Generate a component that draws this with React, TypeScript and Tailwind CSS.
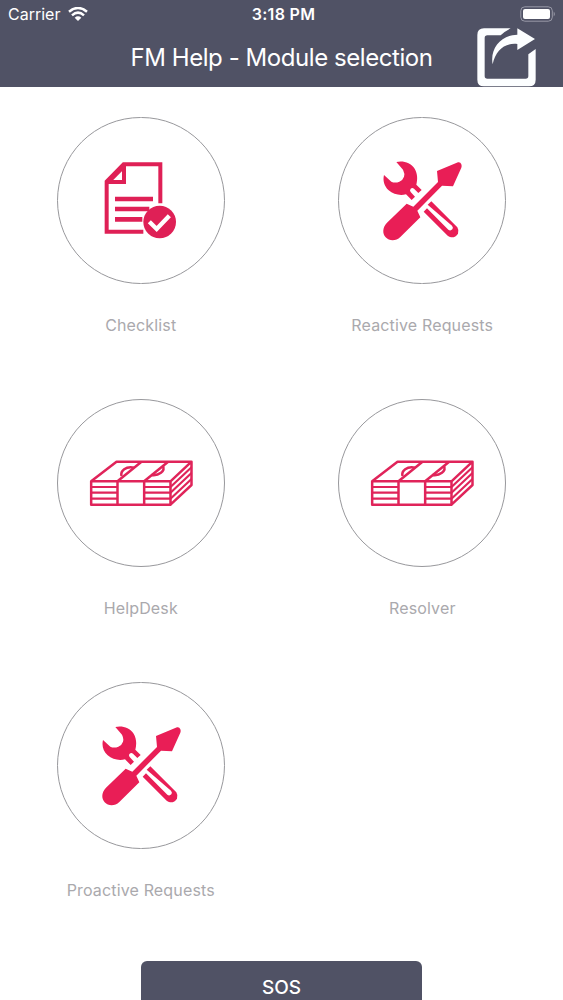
import type { ReactNode } from "react"

function ChecklistIcon() {
  return (
    <svg className="size-[100px]" viewBox="3 0 300 300" fill="none" stroke="#df2056">
      <path d="M211 160V43H101L50 95V245H160" strokeWidth="12" />
      <path d="M50 96H102V43" strokeWidth="12" />
      <path d="M54 97L103 47" strokeWidth="13" />
      <path d="M75 147H189M75 177H178M75 208H157" strokeWidth="14" />
      <circle cx="209" cy="216" r="49" fill="#df2056" stroke="none" />
      <path d="M178 215L200 237L238 197" stroke="white" strokeWidth="13" />
    </svg>
  )
}

function ToolsIcon() {
  return (
    <svg className="size-[100px]" viewBox="6 -1 300 300" fill="#e91e56">
      <path d="M79 35C99 30 122 37 134 55C143 70 143 88 139 103L155 119L145 128L132 115Q127 111 122 115Q118 120 122 125L135 139L125 149L108 132C91 136 70 133 56 120C42 107 38 90 42 74L64 94Q75 99 88 94Q99 89 102 79Q105 70 99 58Z" />
      <path d="M201 62L264 36Q271 34 274 42Q276 47 274 52L249 108L216 106L142 181L151 201L91 260C78 273 58 273 47 261C36 249 38 230 51 217L110 160L130 169L204 95Z" />
      <path d="M184 153L262 231Q268 241 264 250Q257 262 243 261Q238 260 233 256L161 184L171 174L235 238Q241 243 247 237Q251 232 246 226L173 163Z" />
    </svg>
  )
}

function MoneyIcon() {
  return (
    <svg className="h-[75px] w-[120px]" viewBox="2.5 -1 360 225" fill="none" stroke="#e0245a" strokeWidth="7.5" strokeLinejoin="round">
      <path d="M33 108L109 49H334L271 108ZM33 108V178H271V108M334 49V119L271 178" />
      <path d="M35 125H112M35 142H112M35 160H112M192 125H271M192 142H271M192 160H271" strokeWidth="6.5" />
      <path d="M271 125L334 66M271 142L334 83M271 160L334 101" strokeWidth="6.5" />
      <path d="M112 178V108L183 50M192 178V108L263 50" />
      <path d="M124 92C120 76 137 62 162 67M214 89C235 92 257 78 248 61" />
    </svg>
  )
}

function ShareIcon() {
  return (
    <svg className="h-[60px] w-[60px]" viewBox="4 3 180 180" fill="#fcfeff">
      <path d="M105 4H25Q5 4 5 24V158Q5 178 25 178H160Q180 178 180 158V66L158 82V147Q158 155 150 155H35Q27 155 27 147V33Q27 25 35 25H75Q88 12 105 4Z" />
      <path d="M125 4L178 36L125 69V51C87 47 60 70 51 112C42 66 75 24 125 23Z" />
    </svg>
  )
}

function WifiIcon() {
  return (
    <svg className="ml-[7.5px] h-[14px] w-[20px]" viewBox="0 0 60 42" fill="none" stroke="white" strokeWidth="7.5">
      <path d="M3 14Q30 -8 57 14M12 25Q30 9 48 25" />
      <path d="M20 32Q30 24 40 32L30 42Z" fill="white" stroke="none" />
    </svg>
  )
}

function BatteryIcon() {
  return (
    <svg className="h-[16px] w-[36px]" viewBox="0 0 36 16">
      <rect x=".8" y=".8" width="31.5" height="14.4" rx="4" fill="none" stroke="#9899a7" strokeWidth="1" />
      <rect x="3" y="3" width="27" height="10" rx="2" fill="white" />
      <path d="M33.7 5.5Q36 8 33.7 10.5Z" fill="#9899a7" />
    </svg>
  )
}

function Module({ label, children }: { label: string; children: ReactNode }) {
  return (
    <div className="flex h-[282.5px] flex-col items-center">
      <div className="flex h-[167.5px] w-[168px] shrink-0 items-center justify-center rounded-full border border-[#98989c]">
        {children}
      </div>
      <p className="mt-[29px] text-[16px] leading-6 tracking-[0.15px] whitespace-nowrap text-[#aaa9ad]">{label}</p>
    </div>
  )
}

export default function App() {
  return (
    <div className="flex h-[1000px] w-[563px] flex-col overflow-hidden bg-white font-['Inter',sans-serif]">
      <header className="h-[87px] shrink-0 bg-[#505265] text-white">
        <div className="grid h-[28px] grid-cols-3 items-center pr-[7px] pl-[8px]">
          <div className="flex items-center text-[16px]">
            <span>Carrier</span>
            <WifiIcon />
          </div>
          <div className="pl-[3px] text-center text-[16px] font-semibold tracking-[0.3px]">3:18 PM</div>
          <div className="flex justify-end">
            <BatteryIcon />
          </div>
        </div>
        <div className="grid h-[59px] grid-cols-[86px_1fr_86px] items-center">
          <h1 className="col-start-2 text-center text-[24px] tracking-[-0.44px] whitespace-nowrap">FM Help - Module selection</h1>
          <button className="self-end" aria-label="Share">
            <ShareIcon />
          </button>
        </div>
      </header>

      <main className="grid shrink-0 grid-cols-2 pt-[29.5px]">
        <Module label="Checklist"><ChecklistIcon /></Module>
        <Module label="Reactive Requests"><ToolsIcon /></Module>
        <Module label="HelpDesk"><MoneyIcon /></Module>
        <Module label="Resolver"><MoneyIcon /></Module>
        <Module label="Proactive Requests"><ToolsIcon /></Module>
      </main>

      <button className="mx-auto -mt-[3.5px] h-[55px] w-[281px] shrink-0 rounded-md bg-[#505265] text-[19px] font-medium text-white">
        SOS
      </button>
    </div>
  )
}
